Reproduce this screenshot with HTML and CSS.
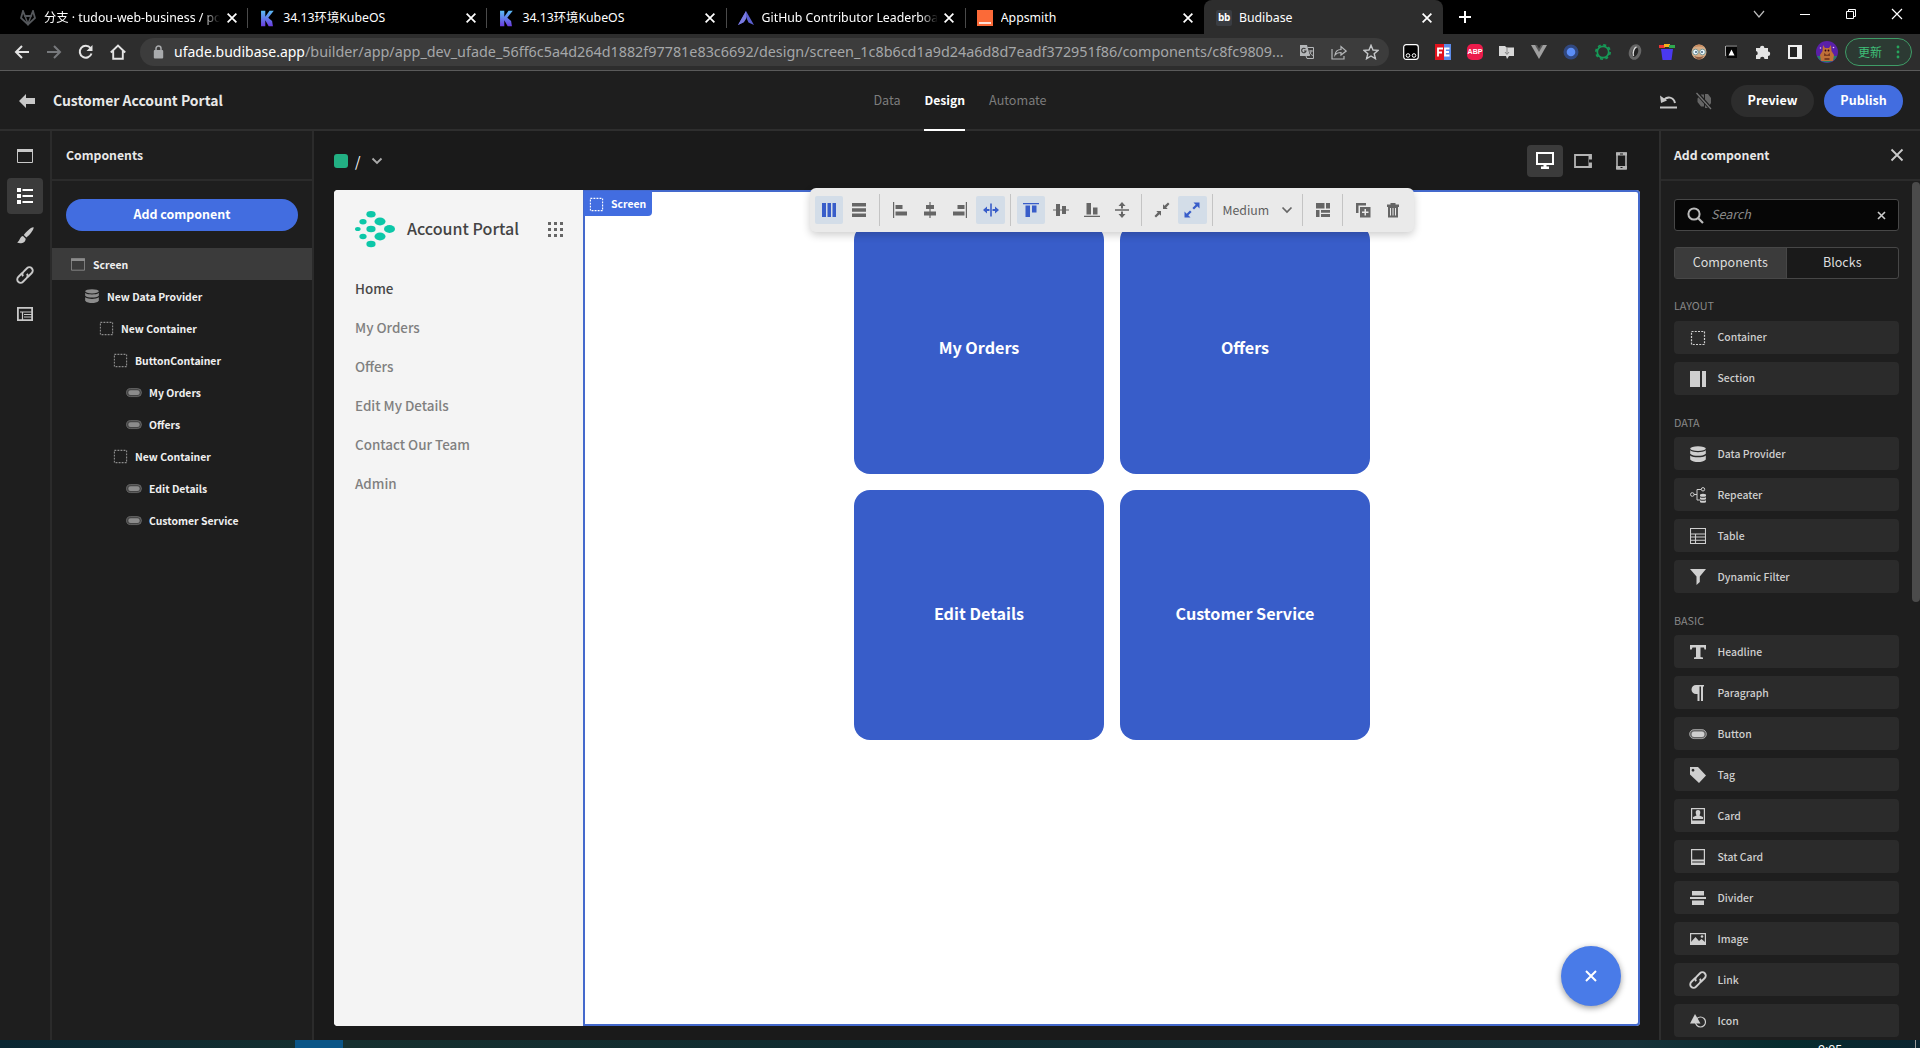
FILE: index.html
```html
<!DOCTYPE html>
<html lang="en">
<head>
<meta charset="utf-8">
<title>Budibase</title>
<link rel="stylesheet" href="styles.css">
</head>
<body>
<svg class="defs" width="0" height="0">
  <defs>
    <linearGradient id="kg" x1="0" y1="0" x2="0" y2="1"><stop offset="0" stop-color="#5bbcf5"/><stop offset="1" stop-color="#6a3be0"/></linearGradient>
    <symbol id="close" viewBox="0 0 16 16"><path d="M3 3l10 10M13 3L3 13" fill="none" stroke="currentColor" stroke-width="2"/></symbol>
    <symbol id="kube" viewBox="0 0 16 20"><path d="M1 1h5v7l5-7h5l-6.500 8L14 13l1 6h-5L6 12v7H1z" fill="url(#kg)"/></symbol>
    <symbol id="container" viewBox="0 0 16 16"><rect x="1.500" y="1.500" width="13" height="13" fill="none" stroke="currentColor" stroke-width="1.200" stroke-dasharray="2 1.250"/></symbol>
    <symbol id="data" viewBox="0 0 16 16"><g fill="currentColor"><ellipse cx="8" cy="2.600" rx="7.800" ry="2.400"/><path d="M.2 4.300C2 6 5 6.200 8 6.200s6-.2 7.800-1.900v3.400C14 9.400 11 9.700 8 9.700S2 9.400.2 7.700z"/><path d="M.2 9.400C2 11 5 11.300 8 11.300s6-.3 7.800-1.900v4C14 15.500 11 16 8 16s-6-.5-7.800-2.600z"/></g></symbol>
    <symbol id="button" viewBox="0 0 18 12"><rect x=".6" y="1.600" width="16.800" height="9" rx="4.500" fill="currentColor" fill-opacity=".35" stroke="currentColor" stroke-opacity=".7" stroke-width=".9"/><rect x="2.600" y="3.400" width="12.800" height="5.500" rx="2.500" fill="currentColor"/></symbol>
    <symbol id="link" viewBox="0 0 16 16"><g fill="none" stroke="currentColor" stroke-width="1.700" transform="rotate(-45 8 8)"><path d="M7.500 5H2.500a3 3 0 0 0 0 6h4.500a3 3 0 0 0 3-2.500"/><path d="M8.500 11H13.500a3 3 0 0 0 0-6H9a3 3 0 0 0-3 2.500"/></g></symbol>
    <symbol id="window" viewBox="0 0 16 14"><path d="M.5.500h15v13H.5z" fill="none" stroke="currentColor"/><path d="M0 0h16v3H0z" fill="currentColor"/></symbol>
    <symbol id="chev" viewBox="0 0 12 8"><path d="M1.500 1.500L6 6l4.500-4.500" fill="none" stroke="currentColor" stroke-width="1.900"/></symbol>
  </defs>
</svg>

<div class="tabstrip">
  <div class="tab"><svg width="16" height="16" viewBox="0 0 16 16"><path d="M3 1L1 8l7 6.500L15 8l-2-7-2 5H5z" fill="none" stroke="#55585c" stroke-width="1.800"/><path d="M5 6l3 8 3-8" fill="none" stroke="#55585c" stroke-width="1.500"/></svg><span class="tt fade">分支 · tudou-web-business / po</span><svg class="x"><use href="#close"/></svg></div>
  <div class="tab sep"><svg width="16" height="17"><use href="#kube"/></svg><span class="tt">34.13环境KubeOS</span><svg class="x"><use href="#close"/></svg></div>
  <div class="tab sep"><svg width="16" height="17"><use href="#kube"/></svg><span class="tt">34.13环境KubeOS</span><svg class="x"><use href="#close"/></svg></div>
  <div class="tab sep"><svg width="16" height="15" viewBox="0 0 16 15"><path d="M8 0l8 14-5.500-2.500L8 6l-2.500 5.500L0 14z" fill="#5b5fd0"/><path d="M8 0v8l-2 3-6 3z" fill="#7a7be0"/></svg><span class="tt fade">GitHub Contributor Leaderboa</span><svg class="x"><use href="#close"/></svg></div>
  <div class="tab sep"><svg width="16" height="16"><rect width="16" height="16" fill="#fb6a38"/><path d="M2 13h12" stroke="#fff" stroke-width="1.600"/></svg><span class="tt">Appsmith</span><svg class="x"><use href="#close"/></svg></div>
  <div class="tab active"><span class="bb">bb</span><span class="tt">Budibase</span><svg class="x"><use href="#close"/></svg></div>
  <svg class="plus" width="14" height="14"><path d="M7 1v12M1 7h12" stroke="#fff" stroke-width="2"/></svg>
  <div class="winctl">
    <svg width="12" height="12"><path d="M1 3l5 6 5-6" fill="none" stroke="#bbb" stroke-width="1.200"/></svg>
    <svg width="12" height="12"><path d="M1 6.500h10" stroke="#fff"/></svg>
    <svg width="12" height="12"><path d="M1.500 3.500h7v7h-7zM3.500 3V1.500h7v7H9" fill="none" stroke="#fff"/></svg>
    <svg width="12" height="12"><path d="M1 1l10 10M11 1L1 11" stroke="#fff" stroke-width="1.200"/></svg>
  </div>
</div>

<div class="toolbar">
  <div class="nav">
    <svg viewBox="0 0 16 16"><path d="M15 8H2M8 2L2 8l6 6" fill="none" stroke="#e4e4e4" stroke-width="2"/></svg>
    <svg viewBox="0 0 16 16"><path d="M1 8h13M8 2l6 6-6 6" fill="none" stroke="#77797c" stroke-width="2"/></svg>
    <svg viewBox="0 0 16 16"><path d="M13.500 9.500A6 6 0 1 1 12.500 4" fill="none" stroke="#e4e4e4" stroke-width="2"/><path d="M14.500 1v6h-6z" fill="#e4e4e4"/></svg>
    <svg viewBox="0 0 16 16"><path d="M.8 8.500L8 1.500l7.200 7M3.200 7v7.800h9.600V7" fill="none" stroke="#e4e4e4" stroke-width="1.900"/></svg>
  </div>
  <div class="url">
    <svg width="11" height="14" viewBox="0 0 11 14"><rect x=".8" y="5" width="9.400" height="8.500" rx="1" fill="#a9abad"/><path d="M3 5V3.500a2.500 2.500 0 0 1 5 0V5" fill="none" stroke="#a9abad" stroke-width="1.500"/></svg>
    <span class="addr"><b>ufade.budibase.app</b>/builder/app/app_dev_ufade_56ff6c5a4d264d1882f97781e83c6692/design/screen_1c8b6cd1a9d24a6d8d7eadf372951f86/components/c8fc9809...</span>
    <div class="urlicons">
      <svg width="16" height="16" viewBox="0 0 16 16"><path d="M1 1h7l3 11H1z" fill="#b5b7b9"/><path d="M8.500 3.500h6v11H8l-1-2.500" fill="none" stroke="#b5b7b9"/><path d="M6.500 5A2.200 2.200 0 1 0 7 7H5" fill="none" stroke="#3c3c3c" stroke-width="1.100"/><path d="M10 7h4M12 6v1c0 2-1 3.500-2 4M11 8c.5 2 1.500 3 3 3.500" fill="none" stroke="#b5b7b9" stroke-width=".9"/></svg>
      <svg width="16" height="16" viewBox="0 0 16 16"><path d="M1 5v10h12v-3M4 11c.5-4 3-5.500 6-5.500V2.500L15.200 7 10 11V8.500C7.500 8.500 5.500 9 4 11z" fill="none" stroke="#b5b7b9" stroke-width="1.200"/></svg>
      <svg width="16" height="16" viewBox="0 0 16 16"><path d="M8 1.300l2 4.700 5 .4-3.800 3.300 1.200 5L8 12l-4.400 2.700 1.200-5L1 6.400 6 6z" fill="none" stroke="#c5c7c9" stroke-width="1.400"/></svg>
    </div>
  </div>
  <div class="exts">
    <svg viewBox="0 0 16 16"><rect x=".7" y=".7" width="14.600" height="14.600" rx="2.500" fill="#000" stroke="#fff" stroke-width="1.200"/><circle cx="5" cy="11.500" r="1.800" fill="none" stroke="#fff"/><circle cx="11" cy="11.500" r="1.800" fill="none" stroke="#fff"/></svg>
    <svg viewBox="0 0 16 16"><path d="M0 0h9v16H0z" fill="#e0121d"/><path d="M9 0h7v16H9z" fill="#5c8be8"/><path d="M3 12.500V4.500h5M3 8.500h4M14.500 4.500H10v7h4.500M10 8h4" fill="none" stroke="#fff" stroke-width="1.800"/></svg>
    <span class="abp">ABP</span>
    <svg viewBox="0 0 16 16"><path d="M0 2h6l1.500 1.500H15V12h-5l-2 3-1-3H0z" fill="#d8d8d8"/><path d="M8 4v6M6 8l2 2.500L10 8" stroke="#888" fill="none"/></svg>
    <svg viewBox="0 0 16 16"><path d="M0 1h16L8 15z" fill="#a0a0a0"/><path d="M4 1h8L8 8z" fill="#555"/><path d="M6 1h4L8 4.500z" fill="#2b2b2b"/></svg>
    <svg viewBox="0 0 16 16"><circle cx="8" cy="8" r="7.500" fill="#31487f"/><circle cx="8" cy="8" r="4.300" fill="#5b8df6"/></svg>
    <svg viewBox="0 0 16 16"><circle cx="8" cy="8" r="7.100" fill="none" stroke="#169a57" stroke-width="1.700" stroke-dasharray="3 2.580"/><circle cx="8" cy="8" r="5.700" fill="none" stroke="#169a57" stroke-width="1.700"/></svg>
    <svg viewBox="0 0 16 16"><ellipse cx="8" cy="8" rx="4.500" ry="6.500" transform="rotate(20 8 8)" fill="#222" stroke="#666" stroke-width="3"/><path d="M9.500 3c-3 1-4 6-3 9" fill="none" stroke="#ddd" stroke-width="1.500"/></svg>
    <svg viewBox="0 0 16 16"><path d="M2 5h12l-1.500 11h-9z" fill="#4a39f0"/><path d="M0 1h6v3H0z" fill="#e33"/><path d="M5 0h6v3H5z" fill="#f6b21b"/><path d="M10 1h6v3h-6z" fill="#2fa84f"/></svg>
    <svg viewBox="0 0 16 16"><circle cx="8" cy="8" r="7.500" fill="#d6ad88"/><path d="M2.500 3.500q5.500-6 11 0-5.500-2-11 0" fill="#c98b5e"/><path d="M3 12q5 7 10 0-5 2-10 0" fill="#8c5a40"/><circle cx="4.500" cy="8" r="2.800" fill="#e8f5fb" stroke="#799"/><circle cx="11.500" cy="8" r="2.800" fill="#e8f5fb" stroke="#799"/><circle cx="5" cy="8" r=".9" fill="#357"/><circle cx="11" cy="8" r=".9" fill="#357"/></svg>
    <svg viewBox="0 0 16 16"><path d="M2 1h12v13H4" fill="#050505"/><path d="M2.500 12V2H14" fill="none" stroke="#aaa"/><path d="M8.500 5.500l3 6h-6z" fill="#fff"/></svg>
    <svg viewBox="0 0 16 16"><path d="M1 4h4a2.200 2.200 0 1 1 4.400 0H13v3.500a2.200 2.200 0 1 1 0 4.400V15H9.500a2.200 2.200 0 0 0-4.400 0H1v-3.700a2.200 2.200 0 0 0 0-4.300z" fill="#e4e4e4"/></svg>
    <svg viewBox="0 0 16 16"><path d="M2 2h12v12H2z" fill="#222" stroke="#eee" stroke-width="2"/><path d="M10 2h4v12h-4z" fill="#eee"/></svg>
    <svg class="avatar" viewBox="0 0 22 22"><circle cx="11" cy="11" r="11" fill="#5a20a8"/><path d="M1 15a11 11 0 0 0 20 0z" fill="#26806a"/><path d="M7 4l2 3h4l2-3 .5 6 2.500 4-1 6H5l-1-6 2.500-4z" fill="#c07038"/><circle cx="9.500" cy="9.500" r=".9" fill="#301"/><circle cx="12.500" cy="9.500" r=".9" fill="#301"/><path d="M8 12l3 2 3-2v3H8zM8.500 17h5v2h-5z" fill="#7d3b20"/><circle cx="4.500" cy="7" r=".8" fill="#e4c6ff"/><circle cx="17.500" cy="6.500" r=".8" fill="#e4c6ff"/></svg>
    <span class="update">更新<svg viewBox="0 0 4 16"><g fill="#27a55c"><circle cx="2" cy="3" r="1.400"/><circle cx="2" cy="8" r="1.400"/><circle cx="2" cy="13" r="1.400"/></g></svg></span>
  </div>
</div>

<div class="app">
  <header class="top">
    <div class="appname"><svg width="16" height="14" viewBox="0 0 16 14"><path d="M0 7l7-7v4h9v6H7v4z" fill="#c8c8c8"/></svg><span>Customer Account Portal</span></div>
    <nav class="toptabs"><span>Data</span><span class="on">Design</span><span>Automate</span></nav>
    <div class="actions">
      <svg width="17" height="15" viewBox="0 0 17 15"><path d="M3.500 6.500C7 2 13.500 2.500 15 9" fill="none" stroke="#c8c8c8" stroke-width="2"/><path d="M0 1.500l1 7.500 6-2.500z" fill="#c8c8c8"/><path d="M0 13.500h17" stroke="#c8c8c8" stroke-width="2"/></svg>
      <svg width="18" height="18" viewBox="0 0 18 18"><path d="M6 2.500h3v12H6L2.500 10V6.500zM10 2h3l3 4v5l-3 5h-3z" fill="#656565"/><path d="M2 1l14 16" stroke="#1e1e1e" stroke-width="3.500"/><path d="M1.500 1L16 17" stroke="#757575" stroke-width="1.300"/></svg>
      <span class="btn dark">Preview</span><span class="btn blue">Publish</span>
    </div>
  </header>
  <div class="body">
    <aside class="rail">
      <div><svg width="16" height="14"><use href="#window"/></svg></div>
      <div class="on"><svg width="16" height="16" viewBox="0 0 16 16"><path d="M0 0h4v4H0zM0 6h4v4H0zM0 12h4v4H0zM5.500 1h10.500v2H5.500zM5.500 7h10.500v2H5.500zM5.500 13h10.500v2H5.500z" fill="#fff"/></svg></div>
      <div><svg width="17" height="17" viewBox="0 0 17 17"><path d="M16.500.3c-2-.6-8 5-9.700 7.700l2.600 2.600C12.500 8.500 17.500 2 16.500.3zM6 9c-3 0-2.500 4-5.800 6.600C3 17 8.500 16.500 8.700 11.700z" fill="currentColor"/></svg></div>
      <div><svg width="18" height="18"><use href="#link"/></svg></div>
      <div><svg width="16" height="14" viewBox="0 0 16 14"><path d="M.9.900h14.200v12.200H.9z" fill="none" stroke="currentColor" stroke-width="1.800"/><path d="M3 5h12M5.500 5v8M7 7.500h8M7 10h8" stroke="currentColor" stroke-width="1.200"/></svg></div>
    </aside>
    <aside class="left">
      <div class="phead">Components</div>
      <div class="addbtn">Add component</div>
      <div class="tree">
        <div class="row l0 sel"><svg width="14" height="13"><use href="#window"/></svg>Screen</div>
        <div class="row l1"><svg width="14" height="14"><use href="#data"/></svg>New Data Provider</div>
        <div class="row l2"><svg width="15" height="15"><use href="#container"/></svg>New Container</div>
        <div class="row l3"><svg width="15" height="15"><use href="#container"/></svg>ButtonContainer</div>
        <div class="row l4"><svg width="16" height="11"><use href="#button"/></svg>My Orders</div>
        <div class="row l4"><svg width="16" height="11"><use href="#button"/></svg>Offers</div>
        <div class="row l3"><svg width="15" height="15"><use href="#container"/></svg>New Container</div>
        <div class="row l4"><svg width="16" height="11"><use href="#button"/></svg>Edit Details</div>
        <div class="row l4"><svg width="16" height="11"><use href="#button"/></svg>Customer Service</div>
      </div>
    </aside>
    <main class="center">
      <div class="cbar">
        <i class="role"></i><span>/</span><svg class="cv" width="12" height="8"><use href="#chev"/></svg>
        <div class="devices">
          <div class="on"><svg width="18" height="17" viewBox="0 0 18 17"><path d="M1 1h16v11H1z" fill="none" stroke="#fff" stroke-width="2"/><path d="M7.500 12h3v2.500H13V17H5v-2.500h2.500z" fill="#fff"/></svg></div>
          <div><svg width="18" height="14" viewBox="0 0 18 14"><path d="M1 1h16v12H1z" fill="none" stroke="#b4b4b4" stroke-width="1.800"/><path d="M16 1v12" stroke="#b4b4b4" stroke-width="3"/><path d="M15 5.500h3v3h-3z" fill="#1a1a1a"/></svg></div>
          <div><svg width="11" height="18" viewBox="0 0 11 18"><path d="M1 1h9v16H1z" fill="none" stroke="#b4b4b4" stroke-width="1.600"/><path d="M0 2h11M0 15.500h11" stroke="#b4b4b4" stroke-width="3"/><path d="M4 2h3M4.500 15.500h2" stroke="#1a1a1a"/></svg></div>
        </div>
      </div>
      <div class="canvas">
        <div class="side">
          <div class="brand">
            <svg width="40" height="37" viewBox="0 0 40 37"><g fill="#0cc7a8"><ellipse cx="16" cy="3.300" rx="4.600" ry="3.300"/><ellipse cx="8" cy="10.700" rx="3.600" ry="2.700"/><ellipse cx="25" cy="10.500" rx="5.500" ry="3.900"/><ellipse cx="2.800" cy="18" rx="2.800" ry="2.100"/><ellipse cx="16" cy="18" rx="4.600" ry="3.300"/><ellipse cx="34.500" cy="18" rx="5.500" ry="3.900"/><ellipse cx="8" cy="25.500" rx="3.600" ry="2.700"/><ellipse cx="25" cy="25.500" rx="5.500" ry="3.900"/><ellipse cx="16" cy="33" rx="4.600" ry="3.300"/></g></svg>
            <span>Account Portal</span>
            <svg width="15" height="15" viewBox="0 0 15 15"><path d="M0 1.500h15M0 7.500h15M0 13.500h15" stroke="#666" stroke-width="3" stroke-dasharray="3 3"/></svg>
          </div>
          <div class="links"><b>Home</b><span>My Orders</span><span>Offers</span><span>Edit My Details</span><span>Contact Our Team</span><span>Admin</span></div>
        </div>
        <div class="screen">
          <div class="cards"><div>My Orders</div><div>Offers</div><div>Edit Details</div><div>Customer Service</div></div>
          <div class="tag"><svg width="15" height="15"><use href="#container"/></svg>Screen</div>
          <div class="fab"><svg width="14" height="14"><path d="M2 2l10 10M12 2L2 12" stroke="#fff" stroke-width="2"/></svg></div>
          <div class="tools">
            <i class="on"><svg viewBox="0 0 16 16"><path d="M1 1h4v14H1zM6.500 1h3.500v14H6.500zM11.500 1H15v14h-3.500z"/></svg></i>
            <i><svg viewBox="0 0 16 16"><path d="M1 1h14v3.500H1zM1 6.300h14v3.500H1zM1 11.600h14V15H1z"/></svg></i>
            <hr>
            <i><svg viewBox="0 0 16 16"><path d="M1 0h1.200v16H1zM3.500 3h7v4h-7zM3.500 9.500H15v4H3.500z"/></svg></i>
            <i><svg viewBox="0 0 16 16"><path d="M7.400 0h1.200v16H7.400zM4 3h8v4H4zM2 9.500h12v4H2z"/></svg></i>
            <i><svg viewBox="0 0 16 16"><path d="M13.800 0H15v16h-1.200zM5.500 3h7v4h-7zM1 9.500h11.500v4H1z"/></svg></i>
            <i class="on"><svg viewBox="0 0 16 16"><path d="M7.200 1.500h1.600v13H7.200zM0 8l4-3.500V7h2.500v2H4v2.500zM16 8l-4-3.500V7H9.500v2H12v2.500z"/></svg></i>
            <hr>
            <i class="on"><svg viewBox="0 0 16 16"><path d="M0 1h16v1.200H0zM2.500 3.500h4.500V15H2.500zM9 3.500h4.500v7H9z"/></svg></i>
            <i><svg viewBox="0 0 16 16"><path d="M0 7.400h16v1.200H0zM3 2h4v12H3zM9 4h4v8H9z"/></svg></i>
            <i><svg viewBox="0 0 16 16"><path d="M0 13.800h16V15H0zM2.500 1h4.500v11.500H2.500zM9 5.500h4.500v7H9z"/></svg></i>
            <i><svg viewBox="0 0 16 16"><path d="M1 7.200h14v1.600H1zM8 0l3.500 4H9v2.500H7V4H4.500zM8 16l3.500-4H9V9.500H7V12H4.500z"/></svg></i>
            <hr>
            <i><svg viewBox="0 0 16 16"><path d="M9 7V2.300l1.500 1.500L14 .5 15.500 2l-3.300 3.500L13.700 7zM7 9v4.700l-1.500-1.500L2 15.500.5 14l3.300-3.500L2.300 9z"/></svg></i>
            <i class="on"><svg viewBox="0 0 16 16"><path d="M15.500.5v6L13.300 4.300 10 7.600 8.400 6l3.300-3.300L9.500.5zM.5 15.500v-6l2.200 2.200L6 8.400 7.600 10l-3.300 3.300 2.200 2.200z"/></svg></i>
            <hr>
            <span class="dd">Medium<svg viewBox="0 0 12 8"><path d="M1.500 1.500L6 6l4.500-4.500" fill="none" stroke="#666" stroke-width="1.700"/></svg></span>
            <hr>
            <i><svg viewBox="0 0 16 16"><path d="M1 1h8.500v5.500H1zM11 1h4v5.500h-4zM1 8h3.500v7H1zM6 8h9v2.700H6zM6 12h9v3H6z"/></svg></i>
            <hr>
            <i><svg viewBox="0 0 16 16"><path d="M1 1h10v2.500H3.500V11H1z"/><path fill-rule="evenodd" d="M5 5h10.500v10.500H5zM9.500 7v2.500H7v1.500h2.500v2.500H11V11h2.500V9.500H11V7z"/></svg></i>
            <i><svg viewBox="0 0 16 16"><path fill-rule="evenodd" d="M2 2.500h3.500V1h5v1.500H14V5h-1v10.500H3V5H2zM5 6v7.500h1V6zM7.500 6v7.500h1V6zM10 6v7.500h1V6z"/></svg></i>
          </div>
        </div>
      </div>
    </main>
    <aside class="right">
      <div class="phead">Add component<svg width="14" height="14"><path d="M1.500 1.500l11 11M12.500 1.500l-11 11" stroke="#ccc" stroke-width="1.800"/></svg></div>
      <div class="list">
        <div class="search"><svg width="17" height="17" viewBox="0 0 17 17"><circle cx="7" cy="7" r="5.600" fill="none" stroke="#bbb" stroke-width="2"/><path d="M11 11l5 5" stroke="#bbb" stroke-width="2.200"/></svg><em>Search</em><svg width="9" height="9"><path d="M1 1l7 7M8 1L1 8" stroke="#ccc" stroke-width="1.600"/></svg></div>
        <div class="seg"><span class="on">Components</span><span>Blocks</span></div>
        <h4 class="first">LAYOUT</h4>
        <div class="items">
          <div><svg><use href="#container"/></svg>Container</div>
          <div><svg viewBox="0 0 16 16"><path d="M0 0h10v16H0zM12 0h4v16h-4z" fill="currentColor"/></svg>Section</div>
        </div>
        <h4>DATA</h4>
        <div class="items">
          <div><svg><use href="#data"/></svg>Data Provider</div>
          <div><svg viewBox="0 0 16 16"><circle cx="2.300" cy="7.500" r="1.800" fill="none" stroke="currentColor"/><circle cx="13" cy="2.300" r="1.700" fill="none" stroke="currentColor"/><path d="M4 7.500h3M11 2.500H7V13h3" fill="none" stroke="currentColor"/><path d="M10 7.500q3-1.500 6 0v1.700q-3 1-6 0zM10 10.200q3 1 6 0v2q-3 1-6 0zM10 13.200q3 1 6 0v2q-3 1.300-6 0z" fill="currentColor"/></svg>Repeater</div>
          <div><svg viewBox="0 0 16 16"><path d="M.5.500h15v15H.5zM.5 6h15M.5 9h15M.5 12.200h15M5.500 6v9.500" fill="none" stroke="currentColor" stroke-width="1.100"/></svg>Table</div>
          <div><svg viewBox="0 0 16 16"><path d="M0 0h16L9.800 7.500V13L6.500 16V7.500z" fill="currentColor"/></svg>Dynamic Filter</div>
        </div>
        <h4>BASIC</h4>
        <div class="items">
          <div><svg viewBox="0 0 16 16"><path d="M0 1h16v4.500h-1.500L14 3.500h-3.500V13l2.500.5V15H4v-1.500l2-.5V3.500H2.500L1.700 5.500H0z" fill="currentColor"/></svg>Headline</div>
          <div><svg viewBox="0 0 16 16"><path d="M6 0h8v1.500h-1V16h-2V1.500H9.500V16h-2V9H6A4.500 4.500 0 0 1 6 0z" fill="currentColor"/></svg>Paragraph</div>
          <div><svg class="wide"><use href="#button"/></svg>Button</div>
          <div><svg viewBox="0 0 16 16"><path fill-rule="evenodd" d="M0 0h8l8 8.500L9 16 0 7.500zM3 1.800a1.400 1.400 0 1 0 .01 0z" fill="currentColor"/></svg>Tag</div>
          <div><svg viewBox="0 0 16 16"><path d="M1.600.6h12.800v14.800H1.600z" fill="none" stroke="currentColor" stroke-width="1.200"/><path d="M8 2c2 0 2.600 1.500 2.200 3.500L9.500 7.500 13 9v2H3V9l3.500-1.500-.7-2C5.400 3.500 6 2 8 2zM1 12.500h14V16H1z" fill="currentColor"/></svg>Card</div>
          <div><svg viewBox="0 0 16 16"><path d="M1.600.6h12.800v14.800H1.600z" fill="none" stroke="currentColor" stroke-width="1.200"/><path d="M1 10.500h14v2H1zM1 13.500h14V16H1z" fill="currentColor"/></svg>Stat Card</div>
          <div><svg viewBox="0 0 16 16"><path d="M2 1h12v4.500H2zM0 7h16v2H0zM2 10.500h12V15H2z" fill="currentColor"/></svg>Divider</div>
          <div><svg viewBox="0 0 16 16"><path d="M.6 2.600h14.800v10.800H.6z" fill="none" stroke="currentColor" stroke-width="1.200"/><path d="M1 11l4.500-5L9 10l2.500-2L15 11v2H1z" fill="currentColor"/><circle cx="12" cy="5.500" r="1.300" fill="currentColor"/></svg>Image</div>
          <div><svg class="big"><use href="#link"/></svg>Link</div>
          <div><svg viewBox="0 0 16 16"><circle cx="10.500" cy="9" r="5" fill="none" stroke="currentColor" stroke-width="1.200"/><path d="M5 1l5.500 9.500H0z" fill="currentColor"/></svg>Icon</div>
        </div>
      </div>
      <div class="thumb"></div>
    </aside>
  </div>
</div>
<footer class="taskbar"><div class="task"></div><span class="clock">9:05</span><div class="desk"></div></footer>
</body>
</html>
```

FILE: styles.css
```css
* { box-sizing: border-box; }
body {
  margin: 0; width: 1920px; height: 1048px; overflow: hidden;
  display: flex; flex-direction: column;
  background: #1e1e1e; color: #e8e8e8;
  font: 400 12.5px/1 "Noto Sans CJK SC", sans-serif;
}
svg { display: block; flex: none; }
.defs { position: absolute; }

/* browser chrome */
.tabstrip { height: 34px; flex: none; display: flex; background: #000; padding-left: 8px; font: 400 12.3px/16px "Noto Sans", "Noto Sans CJK SC", sans-serif; color: #fff; }
.tab { width: 239.2px; flex: none; display: flex; align-items: center; padding: 2px 8px 0 12px; position: relative; }
.tab.sep::before { content: ""; position: absolute; left: 0; top: 8px; width: 1px; height: 20px; background: #4a4a4a; }
.tt { margin-left: 8px; width: 176px; white-space: nowrap; overflow: hidden; }
.fade { -webkit-mask-image: linear-gradient(90deg, #000 158px, transparent 176px); }
.x { width: 14px; height: 14px; margin-left: 4.5px; }
.tab.active { background: #2d2d2d; border-radius: 8px 8px 0 0; }
.tab.active .tt { margin-left: 7px; width: 177px; }
.bb { width: 16px; height: 16px; background: #3a3d42; border-radius: 2px; font: 700 10px/15px "Open Sans", sans-serif; text-align: center; letter-spacing: -.5px; }
.plus { margin: 10px 0 0 15px; }
.winctl { margin-left: auto; display: flex; gap: 34px; padding: 8px 17px 0 0; }
.toolbar { height: 37px; flex: none; background: #2d2d2d; border-bottom: 1px solid #5a5a5a; display: flex; align-items: center; padding-bottom: 1px; }
.nav { display: flex; gap: 16px; width: 140px; padding-left: 14px; }
.nav svg { width: 16px; height: 16px; }
.url { width: 1249px; height: 28px; border-radius: 14px; background: #3c3c3c; display: flex; align-items: center; padding: 0 10px 0 13px; color: #a5a7a9; }
.addr { margin-left: 10px; white-space: nowrap; font: 400 14.36px/20px "Noto Sans", sans-serif; width: 1123px; }
.addr b { font-weight: 400; font-size: 14px; color: #fff; }
.urlicons { display: flex; gap: 16px; margin-left: 2px; }
.exts { display: flex; align-items: center; gap: 16px; margin-left: 14px; }
.exts > svg { width: 16px; height: 16px; }
.exts > svg.avatar { width: 22px; height: 22px; margin-left: -3px; }
.abp { width: 16px; height: 16px; border-radius: 5px; background: #ec1b4b; color: #fff; font: 700 7px/16px "Liberation Sans", sans-serif; text-align: center; }
.update { width: 67px; height: 28px; margin-left: -9px; border: 1px solid #3f9d67; border-radius: 14px; background: #2c3a33; color: #3fbf78; font-size: 12px; display: flex; align-items: center; justify-content: space-between; padding: 0 11px 0 12px; }
.update svg { width: 4px; height: 16px; }

/* builder shell */
.app { height: 969px; flex: none; display: flex; flex-direction: column; }
.top { height: 60px; flex: none; border-bottom: 2px solid #2e2e2e; display: grid; grid-template-columns: 1fr auto 1fr; align-items: center; }
.appname { display: flex; align-items: center; gap: 18px; padding-left: 19px; font-size: 13.95px; font-weight: 700; }
.toptabs { display: flex; gap: 24px; height: 60px; font-size: 12.6px; line-height: 58px; color: #7c7c7c; }
.toptabs .on { color: #fff; font-weight: 700; font-size: 12.2px; border-bottom: 2px solid #fff; }
.actions { display: flex; align-items: center; justify-content: flex-end; padding-right: 17px; }
.actions > svg { margin-right: 18px; }
.btn { height: 32px; border-radius: 16px; line-height: 29px; text-align: center; font-weight: 700; color: #fff; }
.btn.dark { width: 83px; background: #2d2d2d; margin-right: 10px; }
.btn.blue { width: 79px; background: #426de0; }
.body { flex: 1; min-height: 0; display: flex; }
.rail { width: 52px; flex: none; border-right: 2px solid #2b2b2b; display: flex; flex-direction: column; align-items: center; gap: 3.5px; padding-top: 7px; color: #c8c8c8; }
.rail div { width: 36px; height: 36px; border-radius: 4px; display: grid; place-items: center; }
.rail .on { background: #3b3b3b; }
.left { width: 262px; flex: none; border-right: 2px solid #2b2b2b; }
.phead { height: 50px; flex: none; border-bottom: 2px solid #2b2b2b; padding: 0 16px 0 14px; display: flex; align-items: center; justify-content: space-between; font-weight: 700; font-size: 12.25px; }
.addbtn { margin: 18px 14px 17px; height: 32px; border-radius: 16px; background: #426de0; color: #fff; font-weight: 700; font-size: 12.45px; line-height: 30px; text-align: center; }
.tree { font-weight: 700; font-size: 10.42px; }
.row { height: 32px; display: flex; align-items: center; gap: 8px; padding-top: 2px; color: #f0f0f0; }
.row svg { color: #8c8c8c; margin-bottom: 2px; }
.l0 { padding-left: 19px; }
.l1 { padding-left: 33px; }
.l2 { padding-left: 46.5px; gap: 7.5px; }
.l3 { padding-left: 60.5px; gap: 7.5px; }
.l4 { padding-left: 74px; gap: 7px; }
.sel { background: #3b3b3b; }

/* canvas */
.center { width: 1345px; flex: none; background: #1a1a1a; padding: 0 18px 0 20px; }
.cbar { height: 59px; display: flex; align-items: center; font-size: 14px; color: #fff; }
.role { width: 14px; height: 14px; border-radius: 3px; background: #22b083; margin-right: 7px; }
.cv { margin-left: 10px; color: #aaa; }
.devices { margin-left: auto; display: flex; gap: 2px; margin-right: 2px; }
.devices div { width: 36px; height: 32px; border-radius: 4px; display: grid; place-items: center; }
.devices .on { background: #3b3b3b; }
.canvas { height: 836px; width: 1306px; display: flex; border-radius: 4px; background: #fff; }
.side { width: 249px; background: #f4f4f4; padding: 20px 20px 0 21px; border-radius: 4px 0 0 4px; }
.brand { display: flex; align-items: center; height: 38px; color: #444; font-weight: 500; font-size: 16.06px; }
.brand span { margin-left: 12px; flex: 1; padding-bottom: 2px; }
.links { margin-top: 21px; display: flex; flex-direction: column; font-weight: 500; font-size: 13.42px; line-height: 39px; color: #808080; }
.links b { font-weight: 500; color: #484848; }
.screen { flex: 1; position: relative; border: 2px solid #4469cc; border-radius: 0 4px 4px 0; display: flex; justify-content: center; padding-top: 32px; }
.cards { display: grid; grid-template-columns: 250px 250px; grid-template-rows: 250px 250px; gap: 16px; height: 516px; margin-left: 1px; }
.cards div { background: #385dc9; border-radius: 16px; color: #fff; font-weight: 700; font-size: 16.16px; display: grid; place-items: center; padding-bottom: 4px; }
.tag { position: absolute; left: -1px; top: -1px; height: 25px; width: 68px; background: #426de0; border-radius: 0 0 4px 0; color: #fff; font-weight: 700; font-size: 10.42px; display: flex; align-items: center; gap: 7px; padding: 2px 0 0 5px; }
.tag svg { margin-bottom: 1px; }
.fab { position: absolute; left: 976px; top: 754px; width: 60px; height: 60px; border-radius: 50%; background: #497be8; box-shadow: 0 2px 6px #0006; display: grid; place-items: center; }
.tools { position: absolute; left: 225px; top: -4px; width: 604px; height: 44px; border-radius: 6px; background: #eaeaea; box-shadow: 0 3px 8px #0003; display: flex; align-items: center; gap: 2px; padding-left: 5px; }
.tools i { width: 28.300px; height: 28px; border-radius: 2px; display: grid; place-items: center; flex: none; }
.tools i svg { width: 16px; height: 16px; fill: #666; }
.tools .on { background: #d3dde8; }
.tools .on svg { fill: #385dc9; }
.tools hr { width: 1px; height: 32px; border: 0; background: #c4c4c4; margin: 0 3.5px; flex: none; }
.dd { width: 78px; padding-left: 4px; display: flex; align-items: center; gap: 12px; color: #5e5e5e; font-size: 12.3px; }
.dd svg { width: 12px; height: 8px; }

/* component picker */
.right { width: 261px; flex: none; border-left: 2px solid #2e2e2e; position: relative; height: 909px; overflow: hidden; }
.right .phead { padding-left: 13px; }
.list { padding: 18px 21px 0 13px; }
.search { height: 32px; border: 1px solid #474747; border-radius: 3px; background: #060606; display: flex; align-items: center; padding: 0 12px 0 12px; }
.search em { flex: 1; margin-left: 7px; color: #8a8a8a; font-size: 12.5px; padding-bottom: 2px; }
.seg { margin-top: 16px; height: 32px; display: grid; grid-template-columns: 1fr 1fr; border: 1px solid #474747; border-radius: 3px; line-height: 28px; text-align: center; font-size: 12.5px; color: #ddd; background: #1a1a1a; }
.seg .on { background: #3b3b3b; border-right: 1px solid #474747; }
.list h4 { margin: 0; height: 42.300px; padding-top: 21.500px; font-weight: 400; font-size: 10.76px; line-height: 14px; color: #888; }
.list h4.first { height: 41.500px; padding-top: 20px; }
.items { display: flex; flex-direction: column; gap: 8px; font-weight: 500; font-size: 10.43px; color: #cfcfcf; }
.items div { height: 33px; border-radius: 4px; background: #2b2b2b; display: flex; align-items: center; gap: 11.500px; padding: 1px 0 0 16px; }
.items svg { width: 16px; height: 16px; }
.items svg.wide { width: 18px; height: 12px; margin: 0 -1px; }
.items svg.big { width: 18px; height: 18px; margin: 0 -1px; }
.thumb { position: absolute; right: 0; top: 51px; width: 8px; height: 420px; border-radius: 4px; background: #4b4b4b; }

/* top sliver of the desktop taskbar */
.taskbar { height: 8px; flex: none; background: linear-gradient(90deg, #0a2733, #16302f 18%, #0f2b30 45%, #17323a 85%, #062c2e 93%, #0b2430); display: flex; overflow: hidden; }
.task { width: 48px; margin-left: 295px; background: #0a5587; }
.clock { margin: 2px 0 0 auto; width: 97px; color: #fff; font: 400 12.3px/16px "Noto Sans", sans-serif; }
.desk { width: 5px; border-left: 1px solid #999; }
```
